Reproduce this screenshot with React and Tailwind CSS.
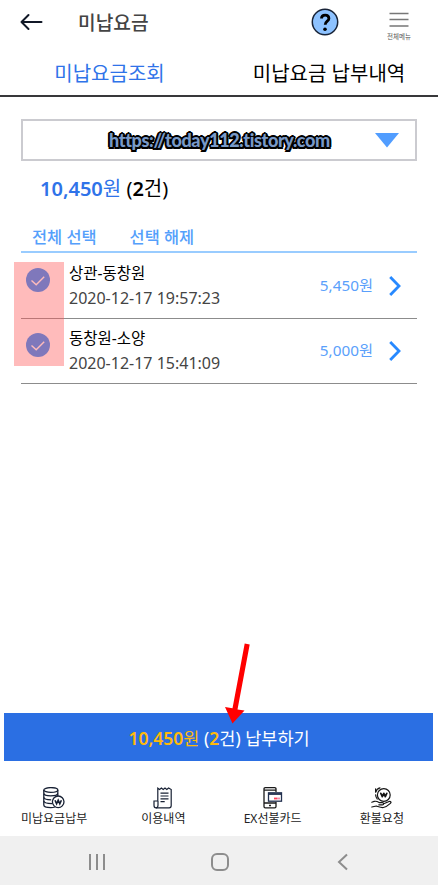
import React, { useState } from 'react';

const HISTORY = [
    { id: 1, route: '상관-동창원', date: '2020-12-17 19:57:23', fee: '5,450원' },
    { id: 2, route: '동창원-소양', date: '2020-12-17 15:41:09', fee: '5,000원' },
];

const CoinsIcon = () => (
    <svg width="22" height="22" viewBox="0 0 22 22" fill="none" stroke="#172033" strokeWidth="1.3">
        <ellipse cx="7.8" cy="3" rx="7" ry="2.4" />
        <path d="M.8 3v3.2c0 1.500 3 2.600 7 2.600s7-1.100 7-2.600V3" />
        <path d="M.8 6.500v3.700c0 1.500 2.800 2.500 7.400 2.600M14.800 6.500v2.700" />
        <path d="M.8 10.200v3.900c0 1.500 2.800 2.500 8.200 2.600" />
        <path d="M.8 14v4c0 1.600 3.200 2.600 7 2.600 1.600 0 3-.2 4.200-.6" />
        <circle cx="15.200" cy="14.800" r="5.800" fill="#fff" />
        <path d="M12 13.200l1.600 3.600 1.600-3.600 1.600 3.600 1.600-3.600" strokeWidth="1.600" />
    </svg>
);

const ReceiptIcon = () => (
    <svg width="20" height="22" viewBox="0 0 20 22" fill="none" stroke="#172033" strokeWidth="1.2">
        <path d="M4.800 14V1.200l1.800 1.300L8.400 1l1.800 1.500L12 1l1.800 1.500L15.600 1l2.600 1.500V18.500c0 1.400-.8 2.300-2 2.300H3" />
        <path d="M4.800 14H1v4.200c0 1.700.8 2.600 2 2.600s2-.9 2-2.600V14" />
        <path d="M7.500 6.200h8M7.500 9h8M7.500 11.800h8M7.500 14.600h4.200" />
    </svg>
);

const PrepaidIcon = () => (
    <svg width="20" height="22" viewBox="0 0 20 22" fill="none" stroke="#1a1a1a" strokeWidth="1.3">
        <path d="M13 5V2c0-.8-.5-1.300-1.300-1.300H2.300C1.500.7 1 1.200 1 2v17.500c0 .8.5 1.300 1.300 1.300h9.400c.8 0 1.300-.5 1.300-1.300V15" />
        <path d="M1 3.200h12M1 16h12M6 18.500h2" />
        <rect x="5.500" y="5.800" width="13" height="8.400" fill="#fff" stroke="#22304f" />
        <path d="M5.500 7h13" stroke="#22304f" strokeWidth="1.800" />
        <path d="M11 11.500h3" stroke="#ff4058" strokeWidth="1.800" />
        <path d="M14 11.500h3" stroke="#f08aa8" strokeWidth="1.800" />
    </svg>
);

const RefundIcon = () => (
    <svg width="21" height="22" viewBox="0 0 21 22" fill="none" stroke="#151515" strokeWidth="1.2" strokeLinecap="round" strokeLinejoin="round">
        <circle cx="12.800" cy="8" r="6.400" />
        <path d="M9.800 6.300l1.500 3.400 1.500-3.400 1.500 3.400 1.500-3.400" strokeWidth="1.700" />
        <path d="M4.700 5C5.400 2.800 7 1.200 9 .8M4.600 7.800c.1 1.600.7 3 1.600 4.200" />
        <path d="M4.600 1.900V5" />
        <path d="M.8 15.200l2.400-.8c2-.6 3.400.2 4.900 1.200h3.200c1.800 0 1.800 2.200 0 2.200H7.800M12.700 16.800l5.400-2.300c1.500-.5 2.600.7 1.300 1.900-2.200 2-4.600 3.700-7 4.100-2.500.3-4.800-.8-7.100-1.500L.8 20" />
    </svg>
);

const MENU = [
    { label: '미납요금납부', icon: <CoinsIcon /> },
    { label: '이용내역', icon: <ReceiptIcon /> },
    { label: 'EX선불카드', icon: <PrepaidIcon /> },
    { label: '환불요청', icon: <RefundIcon /> },
];

const Header = () => (
    <header className="flex h-[44px] items-center pl-5 pr-[26px]">
        <button type="button">
            <svg width="23" height="18" viewBox="0 0 23 18" fill="none" stroke="#111827" strokeWidth="2" strokeLinecap="round" strokeLinejoin="round">
                <path d="M21.500 9H1.500M8.500 2l-7 7 7 7" />
            </svg>
        </button>
        <h1 className="ml-[35px] pt-px text-[19.2px] font-medium leading-none text-[#444]">미납요금</h1>
        <button type="button" className="ml-auto">
            <svg width="28" height="28" viewBox="0 0 28 28" fill="none">
                <circle cx="14" cy="14" r="12.700" fill="#8dc2ff" stroke="#182337" strokeWidth="1.500" />
                <path d="M10.500 10.600c0-2.200 1.500-3.500 3.700-3.500s3.700 1.300 3.700 3.300c0 2.700-3.700 2.800-3.700 6.300" stroke="#000" strokeWidth="2.800" />
                <circle cx="14" cy="21.300" r="1.800" fill="#000" />
            </svg>
        </button>
        <button type="button" className="ml-[47px] mt-[9px] flex w-[26px] flex-col items-center">
            <svg width="20" height="16" viewBox="0 0 20 16" stroke="#777" strokeWidth="1.300">
                <path d="M.5 1.500h19M.5 7.500h19M.5 14h19" />
            </svg>
            <span className="mt-1 whitespace-nowrap text-[6.5px] leading-[9px] text-[#555]">전체메뉴</span>
        </button>
    </header>
);

const App = () => {
    const [checked, setChecked] = useState([1, 2]);

    const toggle = (id) => {
        setChecked(checked.includes(id) ? checked.filter((c) => c !== id) : [...checked, id]);
    };

    return (
        <div className="relative flex h-[885px] w-[438px] flex-col overflow-hidden bg-white font-['Noto_Sans','Noto_Sans_CJK_KR',sans-serif] text-black">
            <Header />

            <nav className="flex h-[53px] border-b-2 border-[#38383a] pt-[9px] text-xl leading-none">
                <button type="button" className="w-1/2 text-[#2f73e9]">미납요금조회</button>
                <button type="button" className="w-1/2 whitespace-nowrap pl-px">미납요금 납부내역</button>
            </nav>

            <main className="flex-1 px-[21px] pt-[22px]">
                <div className="flex h-[42px] items-center border-2 border-[#cbcbd0] pl-[86px] pr-4">
                    <span className="whitespace-nowrap font-[Lato,sans-serif] text-[18px] font-black leading-none tracking-[-0.37px] text-[#7899c8] [text-shadow:2px_0_#000,-2px_0_#000,0_2px_#000,0_-2px_#000,1.5px_1.5px_#000,-1.5px_1.5px_#000,1.5px_-1.5px_#000,-1.5px_-1.5px_#000]">
                        https://today112.tistory.com
                    </span>
                    <svg className="ml-auto" width="24" height="15" viewBox="0 0 24 15" fill="#519dff">
                        <path d="M0 0h24L12 14.500z" />
                    </svg>
                </div>

                <p className="mt-[14px] pl-[19px] text-xl leading-7">
                    <span className="text-[#2f73e9]"><b className="font-semibold">10,450</b>원</span> (<b className="font-semibold">2</b>건)
                </p>

                <div className="mt-[18px] flex h-8 gap-[33px] border-b-2 border-[#99ccff] pl-[11px] text-[16.4px] font-medium leading-8 text-[#55a0fb]">
                    <button type="button" onClick={() => setChecked([1, 2])}>전체 선택</button>
                    <button type="button" onClick={() => setChecked([])}>선택 해제</button>
                </div>

                <ul>
                    {HISTORY.map((item) => (
                        <li key={item.id} className="flex h-[65px] border-b border-[#8c8c8c] pl-[5px] pr-4 first:h-[66px] first:pt-px">
                            <button type="button" onClick={() => toggle(item.id)} className="mt-[14px] h-6 w-6">
                                <svg width="24" height="24" viewBox="0 0 24 24" fill="none">
                                    <circle cx="12" cy="12" r="12" fill={checked.includes(item.id) ? '#2a8fff' : '#ccc'} />
                                    <path d="M5.500 12.500l4.700 4.300 8-8" stroke="#fff" strokeWidth="1.400" />
                                </svg>
                            </button>
                            <div className="ml-[19px] mt-[7px] whitespace-nowrap">
                                <p className="text-[15.5px] leading-[25px]">{item.route}</p>
                                <p className="text-base leading-[25px] text-[#444]">{item.date}</p>
                            </div>
                            <div className="ml-auto flex items-center gap-4 pb-px text-[15.3px] text-[#5a9ffb]">
                                {item.fee}
                                <svg width="12" height="20" viewBox="0 0 12 20" fill="none" stroke="#2789ff" strokeWidth="2.800">
                                    <path d="M1.200 1l8.800 9-8.800 9" />
                                </svg>
                            </div>
                        </li>
                    ))}
                </ul>
            </main>

            <button type="button" className="mx-1 h-12 w-[429px] shrink-0 bg-[#2b6fe3] pl-px pt-[3px] text-[17.5px] leading-none text-white">
                <span className="text-[#ffb90b]"><b className="font-semibold">10,450</b>원</span> (<b className="font-semibold text-[#ffb90b]">2</b>건) 납부하기
            </button>

            <footer className="mt-[26px] flex h-[49px] w-[437px] shrink-0">
                {MENU.map((item) => (
                    <button key={item.label} type="button" className="flex w-1/4 flex-col items-center whitespace-nowrap pr-px text-xs leading-4 text-[#222]">
                        {item.icon}
                        <span className="mt-0.5">{item.label}</span>
                    </button>
                ))}
            </footer>

            <div className="flex h-[49px] shrink-0 items-center bg-[#f0f0f0] pb-px pl-[88px] pt-1">
                <svg width="18" height="18" viewBox="0 0 18 18" stroke="#8d8d8d" strokeWidth="2">
                    <path d="M2 1v16M9 1v16M16 1v16" />
                </svg>
                <svg className="ml-[105px]" width="18" height="18" viewBox="0 0 18 18" fill="none" stroke="#8d8d8d" strokeWidth="2">
                    <rect x="1" y="1" width="16" height="16" rx="5" />
                </svg>
                <svg className="ml-[108px]" width="12" height="18" viewBox="0 0 12 18" fill="none" stroke="#8d8d8d" strokeWidth="2">
                    <path d="M10 1.500L2 9l8 7.500" />
                </svg>
            </div>

            {/* highlight over the checkboxes and arrow to the pay button */}
            <div className="pointer-events-none absolute left-[14px] top-[262px] h-[104px] w-[50px] bg-[#ff5555]/40" />
            <svg className="pointer-events-none absolute left-[224px] top-[643px]" width="27" height="82" viewBox="0 0 27 82" fill="#ff0000">
                <path d="M20.700 .5l5 1-12.200 65 7 1L8.500 80.500 1 64l7.500 1.200z" />
            </svg>
        </div>
    );
};

export default App;
